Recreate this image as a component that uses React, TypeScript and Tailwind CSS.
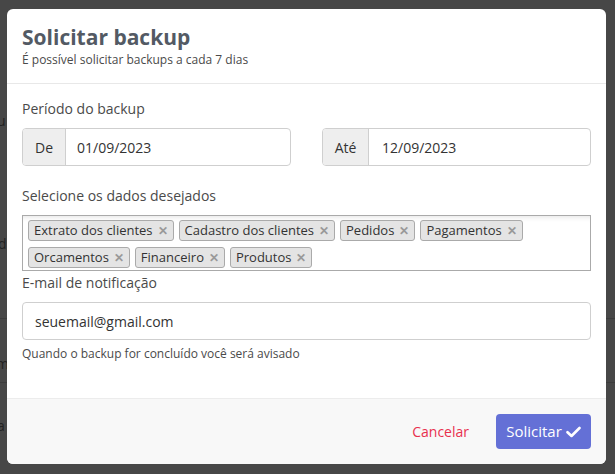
import React from "react";

const tagsRow = ["Extrato dos clientes", "Cadastro dos clientes", "Pedidos", "Pagamentos", "Orcamentos", "Financeiro", "Produtos"];

function Tag({ label }: { label: string }) {
  return (
    <span className="inline-flex items-center h-[21px] px-[5px] bg-[#e4e4e4] border border-[#aaaaaa] rounded-[3px] text-[13px] text-[#333] leading-none">
      {label}
      <span className="ml-[5px] text-[#999] font-bold text-[12px]">✕</span>
    </span>
  );
}

export default function App() {
  return (
    <div className="relative w-[615px] h-[474px] bg-[#474747] overflow-hidden" style={{ fontFamily: '"Open Sans", sans-serif' }}>
      {/* background page hints */}
      <div className="absolute left-0 top-[318px] w-full h-px bg-[#3c3c3c]" />
      <div className="absolute left-0 top-[382px] w-full h-px bg-[#3c3c3c]" />
      <span className="absolute left-[-3px] top-[110px] text-[14px] text-[#222]">u</span>
      <span className="absolute left-[-2px] top-[233px] text-[14px] text-[#222]">d</span>
      <span className="absolute left-[-4px] top-[353px] text-[14px] text-[#222]">m</span>
      <span className="absolute left-[-3px] top-[415px] text-[14px] text-[#222]">a</span>

      <div className="absolute left-[7px] top-[9px] w-[599px] h-[455px] bg-white rounded-[6px] overflow-hidden flex flex-col">
        {/* header */}
        <div className="h-[75px] border-b border-[#e8e8e8] px-[15px] pt-[14px]">
          <div className="text-[21px] font-bold text-[#535a64] leading-[28px]">Solicitar backup</div>
          <div className="text-[12px] text-[#4a4a4a] leading-[16px] mt-[1px]">É possível solicitar backups a cada 7 dias</div>
        </div>

        {/* body */}
        <div className="flex-1 px-[15px] pt-[16px]">
          <div className="text-[14px] text-[#4a4a4a] leading-[18px]">Período do backup</div>
          <div className="flex gap-[31px] mt-[10px]">
            <div className="flex w-[269px] h-[38px] border border-[#cfcfcf] rounded-[4px] overflow-hidden text-[14px] text-[#333]">
              <div className="w-[43px] bg-[#eeeeee] border-r border-[#cfcfcf] flex items-center justify-center">De</div>
              <div className="flex items-center pl-[11px]">01/09/2023</div>
            </div>
            <div className="flex w-[269px] h-[38px] border border-[#cfcfcf] rounded-[4px] overflow-hidden text-[14px] text-[#333]">
              <div className="w-[46px] bg-[#eeeeee] border-r border-[#cfcfcf] flex items-center justify-center">Até</div>
              <div className="flex items-center pl-[13px]">12/09/2023</div>
            </div>
          </div>

          <div className="text-[14px] text-[#4a4a4a] leading-[18px] mt-[21px]">Selecione os dados desejados</div>
          <div className="mt-[10px] w-[569px] h-[56px] border border-[#aaaaaa] bg-white shadow-[inset_0_6px_6px_-6px_rgba(0,0,0,0.15)] px-[5px] pt-[4px] flex flex-wrap gap-x-[5px] gap-y-[6px] content-start">
            {tagsRow.map((t) => (
              <Tag key={t} label={t} />
            ))}
          </div>

          <div className="text-[14px] text-[#4a4a4a] leading-[18px] mt-[3px]">E-mail de notificação</div>
          <div className="mt-[10px] w-[569px] h-[38px] border border-[#cfcfcf] rounded-[4px] flex items-center pl-[12px] text-[14px] text-[#333]">
            seuemail@gmail.com
          </div>
          <div className="text-[12px] text-[#4a4a4a] leading-[16px] mt-[6px]">Quando o backup for concluído você será avisado</div>
        </div>

        {/* footer */}
        <div className="h-[66px] bg-[#f8f8f8] border-t border-[#ececec] flex items-center justify-end pr-[15px] gap-[27px]">
          <span className="text-[14px] text-[#e8304e]">Cancelar</span>
          <button className="h-[35px] w-[95px] bg-[#6470d6] rounded-[4px] text-white text-[15px] flex items-center justify-center gap-[4px]">
            Solicitar
            <svg width="15" height="12" viewBox="0 0 15 12" fill="none">
              <path d="M1.5 6.2 L5.5 10 L13.5 2" stroke="white" strokeWidth="2.6" strokeLinecap="round" strokeLinejoin="round" />
            </svg>
          </button>
        </div>
      </div>
    </div>
  );
}
